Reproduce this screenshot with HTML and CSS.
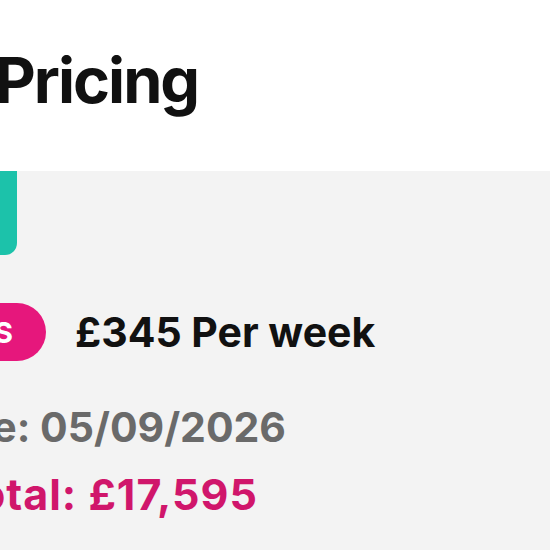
FILE: index.html
```html
<!DOCTYPE html>
<html>
<head>
  <meta charset="UTF-8">
  <title>Pricing</title>
  <link rel="stylesheet" href="styles.css">
</head>
<body>
  <!-- 제목 -->
  <header class="page-head">
    <h1 class="title">Pricing</h1>
  </header>

  <!-- 가격 카드 -->
  <section class="pricing">
    <div class="accent"></div>

    <div class="price-row">
      <div class="tag-slot">
        <span class="tag">51 WEEKS</span>
      </div>
      <div class="price">£345 Per week</div>
    </div>

    <div class="line date-line">
      <span>End date: 05/09/2026</span>
    </div>
    <div class="line total-line">
      <span>Total: £17,595</span>
    </div>
  </section>
</body>
</html>
```

FILE: styles.css
```css
html, body {
  margin:0; padding:0;
  width:100%; height:100%;
  overflow:hidden;
  font-family:Inter, "Open Sans", sans-serif;
  font-weight:700;
  background:#f3f3f3;
}
.page-head {
  height:171px;
  background:#fff;
  padding-top:49px;
  box-sizing:border-box;
  overflow:hidden;
}
.title {
  margin:0 0 0 -5px;
  font-size:63px;
  line-height:63px;
  font-weight:700;
  letter-spacing:-2px;
  color:#111;
  white-space:nowrap;
}
.pricing {
  display:flex;
  flex-direction:column;
  align-items:flex-start;
}
.accent {
  width:17px; height:84px;
  background:#1cc2aa;
  border-bottom-right-radius:12px;
}
.price-row {
  display:flex;
  align-items:center;
  gap:29px;
  margin-top:48px;
}
.tag-slot {
  width:46px;
  display:flex;
  justify-content:flex-end;
}
.tag {
  display:flex;
  align-items:center;
  height:58px;
  padding:0 33px 0 24px;
  border-radius:29px;
  background:#e6177c;
  color:#fff;
  font-size:29px;
  white-space:nowrap;
}
.price {
  font-size:41px;
  line-height:41px;
  color:#111;
  white-space:nowrap;
}
.line {
  display:flex;
  justify-content:flex-end;
  white-space:nowrap;
}
.date-line {
  width:286px;
  margin-top:46px;
  font-size:41px;
  line-height:41px;
  color:#6a6a6a;
}
.total-line {
  width:258px;
  margin-top:25px;
  font-size:43px;
  line-height:43px;
  letter-spacing:1px;
  color:#d0166b;
}
```
